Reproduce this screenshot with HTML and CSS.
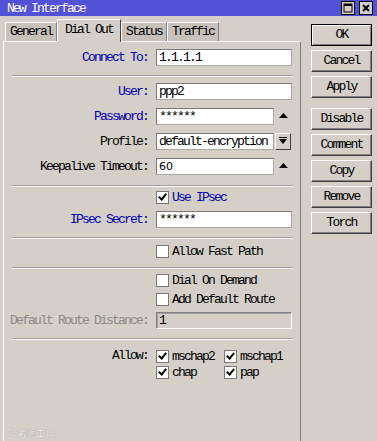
FILE: index.html
```html
<!DOCTYPE html>
<html lang="en">
<head>
    <meta charset="UTF-8">
    <title>New Interface</title>
    <link rel="stylesheet" href="styles.css">
</head>
<body>
<div class="window">

    <!-- title bar -->
    <div class="titlebar">
        <span class="title">New Interface</span>
        <div class="title-btns">
            <span class="tbtn"><svg width="10" height="10" viewBox="0 0 10 10"><rect x="1" y="1" width="8" height="8" fill="none" stroke="#000" stroke-width="1"/><rect x="1" y="1" width="8" height="2" fill="#000"/></svg></span>
            <span class="tbtn"><svg width="10" height="10" viewBox="0 0 10 10"><path d="M2 2 L8 8 M8 2 L2 8" stroke="#000" stroke-width="2"/></svg></span>
        </div>
    </div>

    <div class="main">
        <div class="content">

            <!-- tabs -->
            <div class="tabs">
                <div class="tab">General</div>
                <div class="tab active">Dial Out</div>
                <div class="tab">Status</div>
                <div class="tab">Traffic</div>
            </div>

            <div class="panel">
                <div class="group first">
                    <div class="row"><span class="label req">Connect To:</span><span class="input">1.1.1.1</span></div>
                </div>
                <div class="sep"></div>

                <div class="group fields">
                    <div class="row"><span class="label req">User:</span><span class="input">ppp2</span></div>
                    <div class="row"><span class="label req">Password:</span><span class="input short">******</span><span class="spin"><svg width="9" height="5" viewBox="0 0 9 5"><polygon points="0,5 4.5,0 9,5" fill="#000"/></svg></span></div>
                    <div class="row"><span class="label">Profile:</span><span class="input short">default-encryption</span><span class="dropbtn"><svg width="8" height="9" viewBox="0 0 8 9"><rect x="0" y="0" width="8" height="1" fill="#000"/><polygon points="0,2 8,2 4,7" fill="#000"/></svg></span></div>
                    <div class="row"><span class="label">Keepalive Timeout:</span><span class="input short sans">60</span><span class="spin"><svg width="9" height="5" viewBox="0 0 9 5"><polygon points="0,5 4.5,0 9,5" fill="#000"/></svg></span></div>
                </div>
                <div class="sep"></div>

                <div class="group ipsec">
                    <div class="row check"><span class="box on"></span><span class="req">Use IPsec</span></div>
                    <div class="row"><span class="label req">IPsec Secret:</span><span class="input">******</span></div>
                </div>
                <div class="sep"></div>

                <div class="group fastpath">
                    <div class="row check"><span class="box"></span><span>Allow Fast Path</span></div>
                </div>
                <div class="sep"></div>

                <div class="group dial">
                    <div class="row check"><span class="box"></span><span>Dial On Demand</span></div>
                    <div class="row check"><span class="box"></span><span>Add Default Route</span></div>
                    <div class="row distance"><span class="label off">Default Route Distance:</span><span class="input disabled">1</span></div>
                </div>
                <div class="sep"></div>

                <div class="group allow">
                    <div class="row"><span class="label">Allow:</span>
                        <div class="opts">
                            <span class="opt"><span class="box on"></span>mschap2</span>
                            <span class="opt"><span class="box on"></span>mschap1</span>
                            <span class="opt"><span class="box on"></span>chap</span>
                            <span class="opt"><span class="box on"></span>pap</span>
                        </div>
                    </div>
                </div>

                <div class="watermark"><span class="wm-icon">ʗ°</span>截图工具</div>
            </div>
        </div>

        <!-- buttons -->
        <div class="buttons">
            <div class="btn default">OK</div>
            <div class="btn">Cancel</div>
            <div class="btn">Apply</div>
            <div class="btn spaced">Disable</div>
            <div class="btn">Comment</div>
            <div class="btn">Copy</div>
            <div class="btn">Remove</div>
            <div class="btn">Torch</div>
        </div>
    </div>

</div>
</body>
</html>
```

FILE: styles.css
```css
body {
    margin: 0;
    font-family: "Liberation Mono", "Courier New", monospace;
    font-size: 13px;
    letter-spacing: -1.8px;
    background: #d4d0c8;
    color: #000;
}

.window {
    width: 377px;
    height: 441px;
    overflow: hidden;
}

/* title bar */
.titlebar {
    height: 16px;
    background: #5252d6;
    color: #fff;
    display: flex;
    align-items: center;
    justify-content: space-between;
    padding: 0 4px 0 7px;
}

.title-btns {
    display: flex;
    gap: 4px;
}

.tbtn {
    width: 12px;
    height: 12px;
    background: #d4d0c8;
    border: 1px solid #000;
    display: flex;
    align-items: center;
    justify-content: center;
}

.main {
    display: flex;
}

.content {
    width: 301px;
}

/* tabs */
.tabs {
    display: flex;
    align-items: flex-end;
    height: 21px;
    margin-top: 4px;
    padding-left: 5px;
}

.tab {
    height: 18px;
    line-height: 17px;
    padding: 0 4px;
    background: #c6c2ba;
    border: 1px solid;
    border-color: #fff #808080 transparent #fff;
    border-bottom: none;
}

.tab.active {
    height: 22px;
    line-height: 19px;
    padding: 0 7px;
    margin-bottom: -1px;
    background: #d4d0c8;
    border-right-color: #404040;
    position: relative;
}

/* panel */
.panel {
    margin-left: 3px;
    width: 296px;
    height: 400px;
    border: 1px solid;
    border-color: #fff #808080 #808080 #fff;
    display: flex;
    flex-direction: column;
}

.group {
    display: flex;
    flex-direction: column;
    gap: 8px;
    padding: 6px 0 10px;
}

.group.first { padding: 7px 0 9px; }
.group.ipsec { padding: 2px 0 9px; gap: 5px; }
.group.fastpath { padding: 4px 0 7px; }
.group.dial { padding: 3px 0 9px; gap: 2px; }
.group.allow { padding-top: 8px; }

.sep {
    height: 0;
    margin: 0 7px 0 8px;
    border-top: 1px solid #a0a0a0;
    border-bottom: 1px solid #fff;
}

.row {
    display: flex;
    align-items: center;
    height: 17px;
}

.row.distance { margin-top: 2px; }

.row.check {
    padding-left: 152px;
}

.label {
    width: 144px;
    margin-right: 8px;
    text-align: right;
    flex-shrink: 0;
}

.req { color: #0000b0; }
.off { color: #8c8a86; }

.input {
    width: 136px;
    height: 17px;
    box-sizing: border-box;
    background: #fff;
    border: 1px solid;
    border-color: #7a7a7a #a8a8a8 #a8a8a8 #7a7a7a;
    padding-left: 2px;
    line-height: 15px;
    white-space: nowrap;
    overflow: hidden;
}

.input.short { width: 118px; }
.input.sans { font-family: "DejaVu Sans", sans-serif; font-size: 11px; letter-spacing: 0; }

.input.disabled {
    background: #d4d0c8;
    border-color: #808080 #fff #fff #808080;
    box-shadow: inset 1px 1px 0 #a0a0a0;
}

.spin {
    width: 18px;
    display: flex;
    justify-content: center;
    padding-bottom: 2px;
}

.dropbtn {
    width: 14px;
    height: 15px;
    margin-left: 1px;
    border: 1px solid;
    border-color: #fff #404040 #404040 #fff;
    display: flex;
    align-items: center;
    justify-content: center;
}

/* checkboxes */
.box {
    width: 11px;
    height: 11px;
    background: #fff;
    border: 1px solid #7a7a7a;
    margin-right: 3px;
    flex-shrink: 0;
    position: relative;
}

.box.on::after {
    content: "";
    position: absolute;
    left: 3px;
    top: 0;
    width: 3px;
    height: 6px;
    border: solid #000;
    border-width: 0 2px 2px 0;
    transform: rotate(40deg);
}

.opts {
    display: grid;
    grid-template-columns: 68px auto;
    row-gap: 0;
}

.group.allow .row { height: auto; align-items: flex-start; }
.group.allow .label { line-height: 16px; }

.opt {
    display: flex;
    align-items: center;
    height: 16px;
}

.watermark {
    margin: auto 0 3px 2px;
    height: 12px;
    font-family: "Noto Sans CJK SC", sans-serif;
    font-size: 9px;
    letter-spacing: 0;
    color: #f2f0ec;
    text-shadow: 0 0 1px #7c7a76;
    display: flex;
    align-items: center;
    gap: 2px;
}

.wm-icon {
    font-family: "DejaVu Sans", sans-serif;
    font-size: 10px;
}

/* right buttons */
.buttons {
    margin: 8px 0 0 10px;
    width: 61px;
    display: flex;
    flex-direction: column;
    gap: 4px;
}

.btn {
    height: 22px;
    box-sizing: border-box;
    line-height: 20px;
    text-align: center;
    border: 1px solid;
    border-color: #fff #404040 #404040 #fff;
    box-shadow: inset -1px -1px 0 #808080;
}

.btn.default {
    border-color: #000;
    box-shadow: inset 1px 1px 0 #fff, inset -1px -1px 0 #808080;
}

.btn.spaced { margin-top: 6px; }
```
